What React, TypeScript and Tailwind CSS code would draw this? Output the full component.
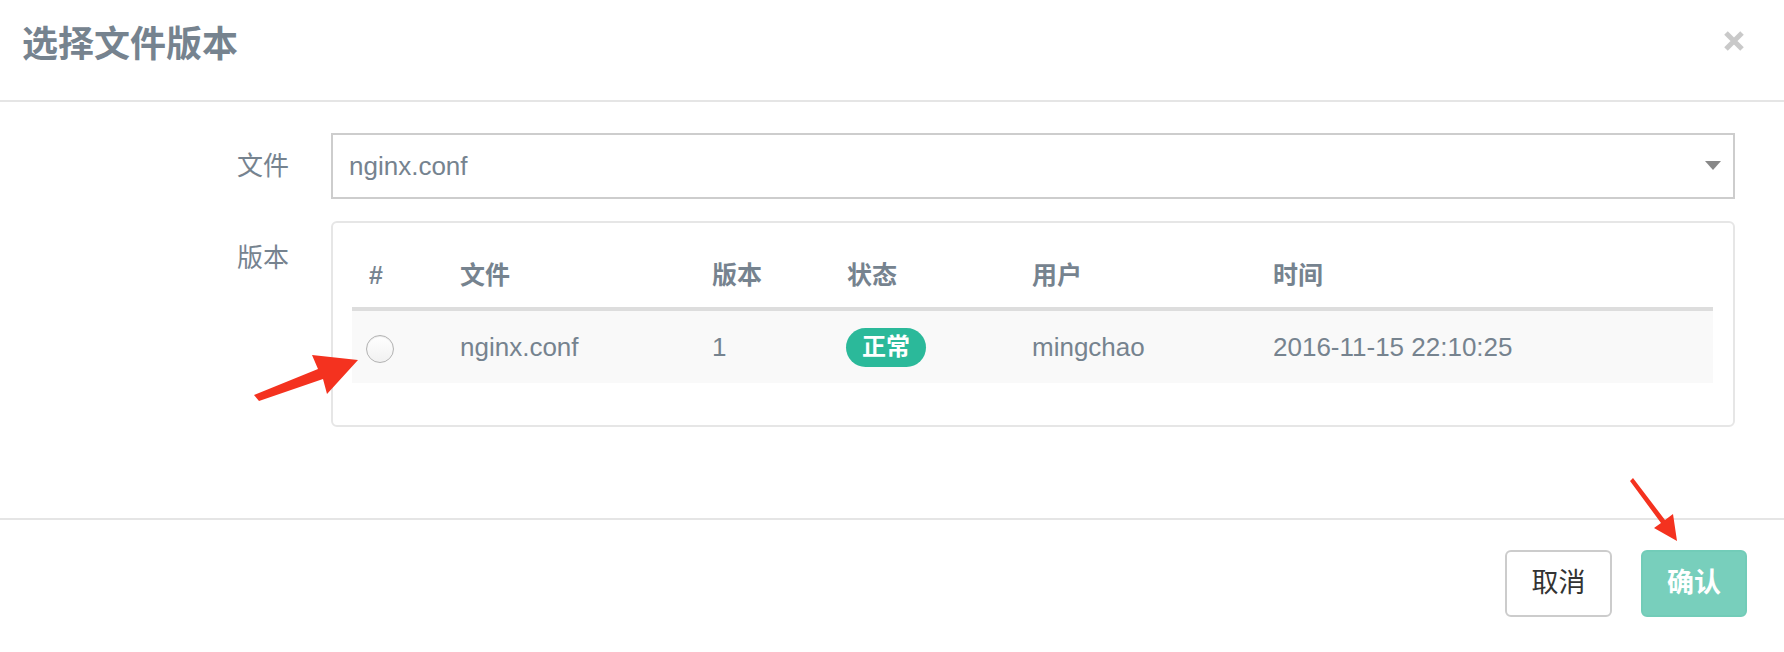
import React from "react";

const columns = ["#", "文件", "版本", "状态", "用户", "时间"];

const CloseIcon = () => (
  <svg width="22" height="22" viewBox="0 0 22 22">
    <path d="M3 3 L19 19 M19 3 L3 19" stroke="#c9c9c9" strokeWidth="5" />
  </svg>
);

const Arrows = () => (
  <svg className="absolute inset-0 pointer-events-none" width="1784" height="652">
    {/* arrow pointing at the radio */}
    <polygon
      points="254,395 259,401 323,379 327,394 358,360 312,355 318,369"
      fill="#f4321f"
    />
    {/* arrow pointing at the confirm button */}
    <polygon
      points="1630,481 1633,478 1665,520 1673,514 1677,541 1654,528 1661,523"
      fill="#f4321f"
    />
  </svg>
);

const VersionTable = () => (
  <div className="h-[206px] border-2 border-[#e6e6e6] rounded-[6px] pl-[19px] pr-[20px] pt-[21px]">
    <div className="grid grid-cols-[91px_252px_135px_185px_241px_1fr] h-[67px] items-center border-b-4 border-[#dddddd] text-[25px] font-semibold text-[#76838f]">
      {columns.map((c) => (
        <div key={c} className="pl-[17px] leading-none">
          {c}
        </div>
      ))}
    </div>
    <div className="grid grid-cols-[91px_252px_135px_185px_241px_1fr] h-[72px] items-center bg-[#f9f9f9] text-[26px] text-[#76838f]">
      <div className="pl-[14px] pt-[4px]">
        <div className="w-[28px] h-[28px] rounded-full border border-[#b3b3b3] bg-gradient-to-b from-white to-[#f1f1f1] shadow-[inset_0_1px_1px_rgba(0,0,0,0.08)]" />
      </div>
      <div className="pl-[17px]">nginx.conf</div>
      <div className="pl-[17px]">1</div>
      <div className="pl-[16px]">
        <span className="inline-flex items-center justify-center h-[39px] px-[16px] rounded-full bg-[#2bb99a] text-white text-[24px] font-bold">
          正常
        </span>
      </div>
      <div className="pl-[17px]">mingchao</div>
      <div className="pl-[17px]">2016-11-15 22:10:25</div>
    </div>
  </div>
);

export default function App() {
  return (
    <div className="relative w-full h-[652px] bg-white font-['Liberation_Sans','Noto_Sans_CJK_SC',sans-serif]">
      <header className="h-[102px] border-b-2 border-[#e5e5e5] flex items-start justify-between pl-[22px] pr-[39px]">
        <h1 className="mt-[27px] text-[36px] leading-none font-semibold text-[#76838f]">选择文件版本</h1>
        <button className="mt-[30px]">
          <CloseIcon />
        </button>
      </header>

      <div className="pt-[31px] pb-[91px] pr-[49px]">
        <div className="flex items-center">
          <label className="w-[331px] shrink-0 text-right pr-[42px] text-[26px] text-[#76838f]">文件</label>
          <div className="flex-1 h-[66px] border-2 border-[#cdcdcd] flex items-center justify-between pl-[16px] pr-[12px]">
            <span className="text-[26px] text-[#76838f]">nginx.conf</span>
            <svg width="16" height="10" viewBox="0 0 16 10">
              <polygon points="0,0 16,0 8,9" fill="#888888" />
            </svg>
          </div>
        </div>

        <div className="flex items-start mt-[22px]">
          <label className="w-[331px] shrink-0 text-right pr-[42px] pt-[18px] text-[26px] text-[#76838f]">版本</label>
          <div className="flex-1">
            <VersionTable />
          </div>
        </div>
      </div>

      <footer className="border-t-2 border-[#e5e5e5] flex justify-end gap-[29px] pt-[30px] pr-[37px]">
        <button className="w-[107px] h-[67px] border-2 border-[#cccccc] rounded-[6px] bg-white text-[27px] text-[#333333]">
          取消
        </button>
        <button className="w-[106px] h-[67px] border-2 border-[#72ccb8] rounded-[6px] bg-[#78cfbc] text-[27px] font-bold text-white">
          确认
        </button>
      </footer>

      <Arrows />
    </div>
  );
}
